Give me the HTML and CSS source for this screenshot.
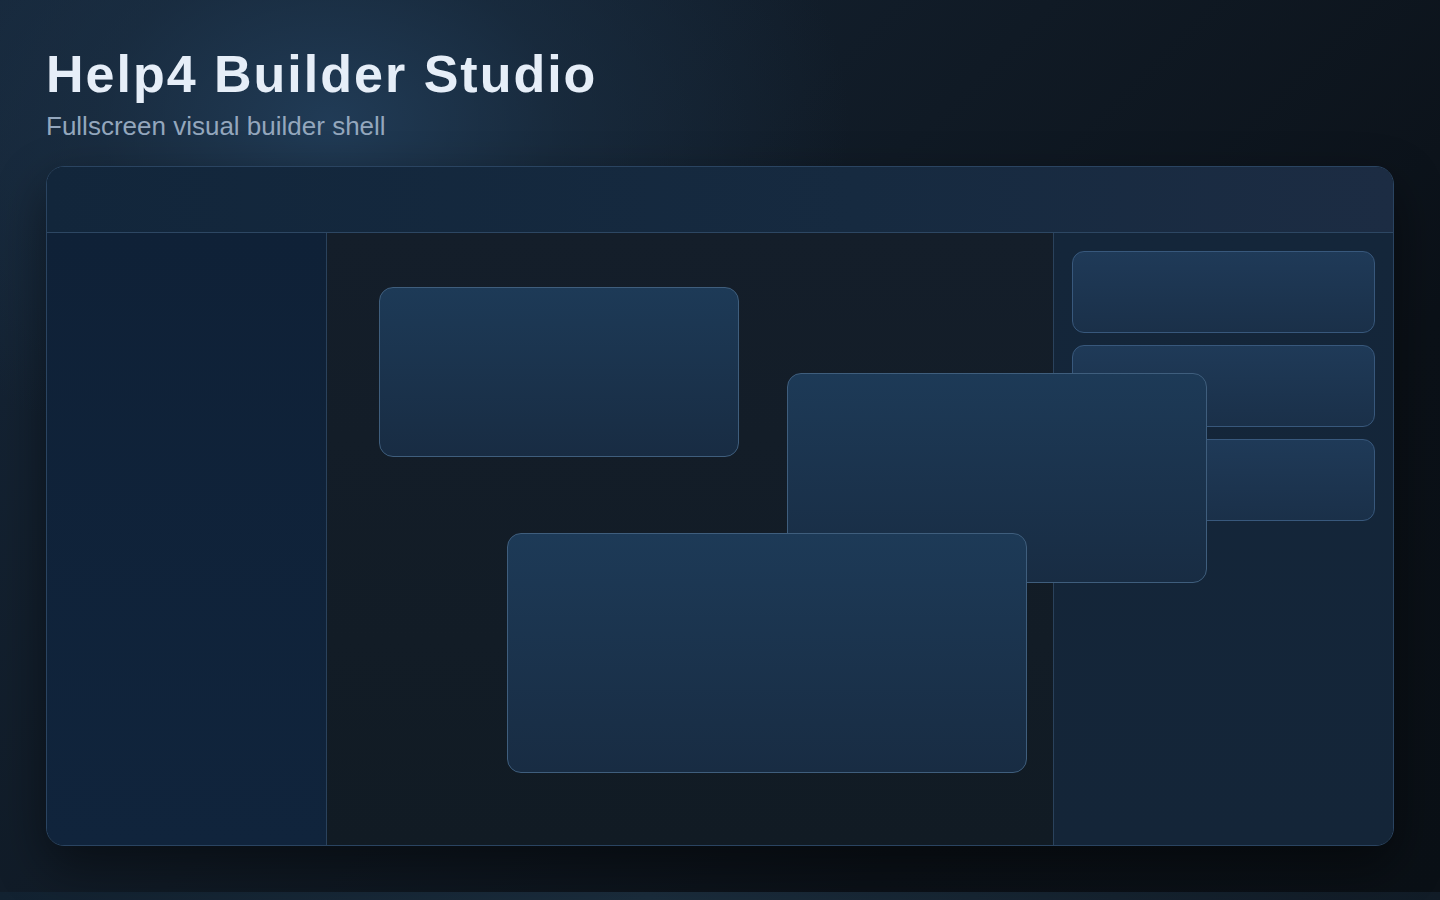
FILE: index.html
```html
<!DOCTYPE html>
<html lang="en">
<head>
<meta charset="utf-8">
<title>Help4 Builder Studio</title>
<link rel="stylesheet" href="styles.css">
</head>
<body>
<div class="page">
  <header class="intro">
    <h1 class="title">Help4 Builder Studio</h1>
    <p class="subtitle">Fullscreen visual builder shell</p>
  </header>
  <section class="shell">
    <div class="shell-header"></div>
    <div class="shell-body">
      <aside class="sidebar"></aside>
      <main class="canvas">
        <div class="node node-a"></div>
        <div class="node node-b"></div>
        <div class="node node-c"></div>
      </main>
      <aside class="inspector">
        <div class="panel-card"></div>
        <div class="panel-card"></div>
        <div class="panel-card"></div>
      </aside>
    </div>
  </section>
</div>
</body>
</html>
```

FILE: styles.css
```css
* { box-sizing: border-box; }
html, body { margin: 0; padding: 0; }
body {
  background: linear-gradient(90deg, #122231 0%, #1b2d3d 45%, #111c27 100%);
  font-family: "Liberation Sans", Arial, sans-serif;
  height: 900px;
  overflow: hidden;
}
.page {
  height: 892px;
  padding: 46px 46px 0 46px;
  background:
    radial-gradient(ellipse 520px 360px at 330px 120px, rgba(34, 62, 90, 0.9) 0%, rgba(28, 50, 72, 0.55) 45%, rgba(20, 34, 48, 0) 100%),
    linear-gradient(135deg, #16273a 0%, #101a25 45%, #0b1118 75%, #0a1016 100%);
  display: flex;
  flex-direction: column;
}
.intro { margin: 0; }
.title {
  margin: 0;
  font-size: 52px;
  line-height: 56px;
  font-weight: 700;
  letter-spacing: 2px;
  color: #e6eef8;
}
.subtitle {
  margin: 9px 0 0 0;
  font-size: 26px;
  line-height: 30px;
  color: #94a7bd;
}
.shell {
  margin-top: 25px;
  height: 680px;
  flex: none;
  border: 1px solid #2a4461;
  border-radius: 18px;
  overflow: hidden;
  display: flex;
  flex-direction: column;
  box-shadow: 0 20px 50px rgba(0, 0, 0, 0.45);
  background: #111b24;
}
.shell-header {
  height: 66px;
  flex: none;
  border-bottom: 1px solid #2d4763;
  background: linear-gradient(90deg, #12263b 0%, #162a40 60%, #1c2c43 100%);
}
.shell-body {
  flex: 1;
  display: flex;
  min-height: 0;
}
.sidebar {
  width: 280px;
  flex: none;
  border-right: 1px solid #2a425c;
  background: linear-gradient(180deg, #0f2137 0%, #10243c 100%);
}
.canvas {
  flex: 1;
  position: relative;
  background: linear-gradient(180deg, #141e2a 0%, #111b24 100%);
  z-index: 2;
}
.inspector {
  width: 340px;
  flex: none;
  border-left: 1px solid #2a425c;
  background: linear-gradient(180deg, #14263a 0%, #142538 100%);
  padding: 18px;
  display: flex;
  flex-direction: column;
  gap: 12px;
}
.panel-card {
  height: 82px;
  border: 1px solid #38587c;
  border-radius: 12px;
  background: linear-gradient(180deg, #1f3a58 0%, #1a3049 100%);
}
.node {
  position: absolute;
  border: 1px solid #3f5e7d;
  border-radius: 14px;
  background: linear-gradient(180deg, #1d3a57 0%, #182c43 100%);
}
.node-a { left: 52px; top: 54px; width: 360px; height: 170px; }
.node-b { left: 460px; top: 140px; width: 420px; height: 210px; }
.node-c { left: 180px; top: 300px; width: 520px; height: 240px; }
```
